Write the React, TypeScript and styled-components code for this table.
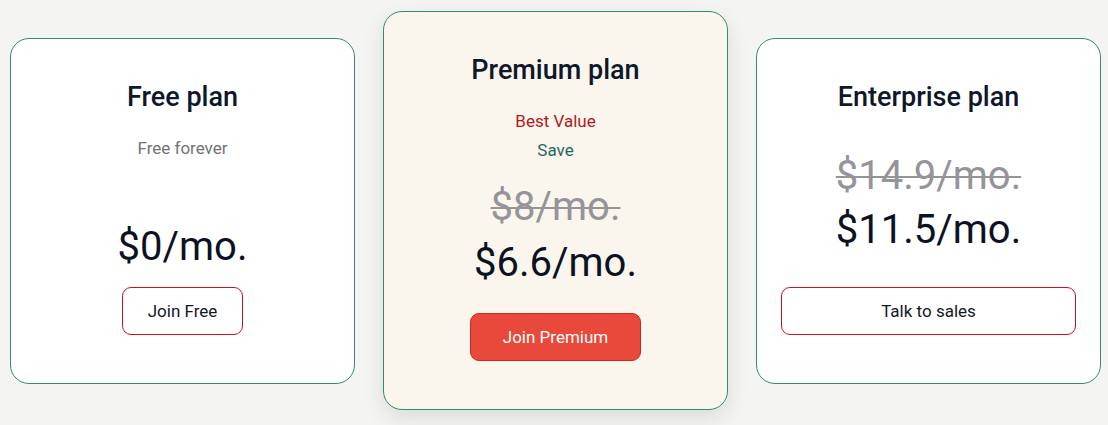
import React from 'react';
import styled, { createGlobalStyle } from 'styled-components';

const GlobalStyle = createGlobalStyle`
  html, body {
    margin: 0;
    padding: 0;
    background: #f4f4f2;
    font-family: Roboto, "Noto Sans", "Liberation Sans", sans-serif;
  }
`;

type Plan = {
    title: string;
    highlight?: boolean;
    subtitle?: string;
    badge?: string;
    save?: string;
    oldPrice?: string;
    price: string;
    cta: string;
    ctaWidth?: string;
    // vertical gaps measured from the design
    priceGap: number;
    mainGap: number;
    ctaGap: number;
};

const plans: Plan[] = [
    {
        title: 'Free plan',
        subtitle: 'Free forever',
        price: '$0/mo.',
        cta: 'Join Free',
        ctaWidth: '121px',
        priceGap: 63,
        mainGap: 0,
        ctaGap: 16,
    },
    {
        title: 'Premium plan',
        highlight: true,
        badge: 'Best Value',
        save: 'Save',
        oldPrice: '$8/mo.',
        price: '$6.6/mo.',
        cta: 'Join Premium',
        ctaWidth: '171px',
        priceGap: 21,
        mainGap: 8,
        ctaGap: 26,
    },
    {
        title: 'Enterprise plan',
        oldPrice: '$14.9/mo.',
        price: '$11.5/mo.',
        cta: 'Talk to sales',
        ctaWidth: '100%',
        priceGap: 38,
        mainGap: 6,
        ctaGap: 33,
    },
];

export default function App() {
    return (
        <>
            <GlobalStyle />
            <Page>
                {plans.map((plan) => (
                    <Card key={plan.title} highlight={plan.highlight}>
                        <Title>{plan.title}</Title>
                        {plan.subtitle && <Subtitle>{plan.subtitle}</Subtitle>}
                        {plan.badge && <Badge>{plan.badge}</Badge>}
                        {plan.save && <SaveLabel>{plan.save}</SaveLabel>}
                        {plan.oldPrice && <OldPrice gap={plan.priceGap}>{plan.oldPrice}</OldPrice>}
                        <Price gap={plan.oldPrice ? plan.mainGap : plan.priceGap}>{plan.price}</Price>
                        <CtaButton primary={plan.highlight} width={plan.ctaWidth} gap={plan.ctaGap}>
                            {plan.cta}
                        </CtaButton>
                    </Card>
                ))}
            </Page>
        </>
    );
}

const Page = styled.div`
    display: flex;
    align-items: center;
    gap: 28px;
    padding: 11px 7px 15px 10px;
    box-sizing: border-box;
    width: 1108px;
    height: 425px;
`;

const Card = styled.div<{ highlight?: boolean }>`
    flex: 0 0 345px;
    box-sizing: border-box;
    display: flex;
    flex-direction: column;
    align-items: center;
    padding: 41px 24px 48px;
    border: 1px solid #358a77;
    border-radius: 19px;
    background: ${(p) => (p.highlight ? '#faf6ed' : '#ffffff')};
    box-shadow: ${(p) => (p.highlight ? '0 8px 22px rgba(0, 0, 0, 0.10)' : 'none')};
`;

const Title = styled.h2`
    margin: 0;
    font-size: 27px;
    line-height: 34px;
    font-weight: 500;
    color: #0f172a;
`;

const Subtitle = styled.p`
    margin: 22px 0 0;
    font-size: 17px;
    line-height: 24px;
    color: #737373;
`;

const Badge = styled.p`
    margin: 22px 0 0;
    font-size: 17px;
    line-height: 24px;
    color: #b3181c;
`;

const SaveLabel = styled.p`
    margin: 5px 0 0;
    font-size: 17px;
    line-height: 24px;
    color: #1b6b5a;
`;

const OldPrice = styled.p<{ gap: number }>`
    margin: ${(p) => p.gap}px 0 0;
    font-size: 40px;
    line-height: 48px;
    color: #949499;
    text-decoration: line-through;
    text-decoration-thickness: 2px;
`;

const Price = styled.p<{ gap: number }>`
    margin: ${(p) => p.gap}px 0 0;
    font-size: 40px;
    line-height: 48px;
    color: #0b1222;
`;

const CtaButton = styled.button<{ primary?: boolean; width?: string; gap: number }>`
    margin-top: ${(p) => p.gap}px;
    width: ${(p) => p.width || 'auto'};
    height: 48px;
    box-sizing: border-box;
    border-radius: 9px;
    border: ${(p) => (p.primary ? '1.5px solid #c8281e' : '1.5px solid #c4161c')};
    background: ${(p) => (p.primary ? '#e8493a' : '#ffffff')};
    color: ${(p) => (p.primary ? '#ffffff' : '#111827')};
    font-family: Roboto, "Noto Sans", "Liberation Sans", sans-serif;
    font-size: 17px;
    cursor: pointer;
`;
